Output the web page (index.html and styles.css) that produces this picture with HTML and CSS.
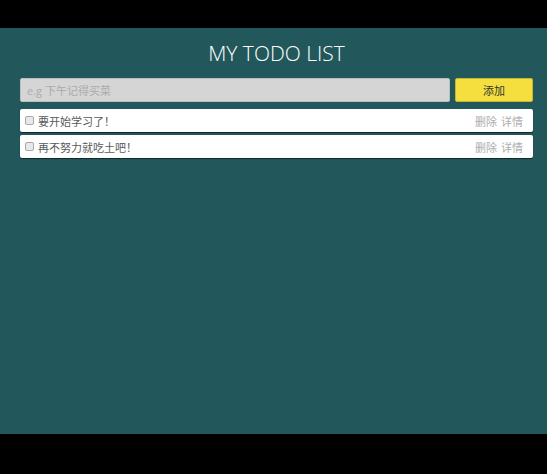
FILE: index.html
```html
<!DOCTYPE html>
<html lang="zh">
<head>
<meta charset="utf-8">
<title>MY TODO LIST</title>
<link rel="stylesheet" href="styles.css">
</head>
<body>
<div class="screen">
  <h1 class="title">MY TODO LIST</h1>
  <div class="add-row">
    <input class="add-input" type="text" placeholder="e.g 下午记得买菜">
    <button class="add-btn">添加</button>
  </div>
  <ul class="list">
    <li class="item">
      <label class="item-left"><input type="checkbox" class="check"><span class="item-text">要开始学习了！</span></label>
      <span class="actions"><span>删除</span><span>详情</span></span>
    </li>
    <li class="item">
      <label class="item-left"><input type="checkbox" class="check"><span class="item-text">再不努力就吃土吧！</span></label>
      <span class="actions"><span>删除</span><span>详情</span></span>
    </li>
  </ul>
</div>
</body>
</html>
```
FILE: styles.css
```css
html, body {
  margin: 0;
  padding: 0;
  background: #000;
  height: 100%;
}
body {
  font-family: "Open Sans", "Noto Sans CJK SC", sans-serif;
}
.screen {
  margin-top: 28px;
  height: 406px;
  background: #22585c;
  padding: 0 14px 0 20px;
  box-sizing: border-box;
  overflow: hidden;
}
.title {
  margin: 0;
  padding-top: 10px;
  height: 50px;
  box-sizing: border-box;
  text-align: center;
  color: #fff;
  font-weight: 300;
  font-size: 21px;
  line-height: 30px;
}
.add-row {
  display: flex;
  gap: 5px;
  height: 24px;
}
.add-input {
  flex: 1;
  margin: 0;
  border: 1px solid #b9c0c0;
  border-radius: 2px;
  background: #d5d5d5;
  padding: 0 6px;
  font-family: "Open Sans", "Noto Sans CJK SC", sans-serif;
  font-size: 11px;
  color: #555;
  outline: none;
}
.add-input::placeholder {
  color: #ababab;
}
.add-btn {
  width: 78px;
  margin: 0;
  border: 1px solid #c7b632;
  border-radius: 2px;
  background: #f4df3e;
  font-family: "Noto Sans CJK SC", sans-serif;
  font-size: 11px;
  color: #333;
  padding: 0;
}
.list {
  list-style: none;
  margin: 7px 0 0;
  padding: 0;
  display: flex;
  flex-direction: column;
  gap: 3px;
}
.item {
  height: 23px;
  background: #fff;
  border-radius: 2px;
  box-shadow: 0 1px 1px rgba(0,0,0,0.55);
  display: flex;
  align-items: center;
  justify-content: space-between;
  padding: 0 10px 0 5px;
  font-family: "Noto Sans CJK SC", sans-serif;
  font-size: 11px;
}
.item-left {
  display: flex;
  align-items: center;
  gap: 4px;
}
.check {
  width: 9px;
  height: 9px;
  margin: 0;
  appearance: none;
  border: 1px solid #a8a8a8;
  border-radius: 2px;
  background: #e8e8e8;
}
.item-text {
  color: #5a5a5a;
}
.actions {
  display: flex;
  gap: 4px;
  color: #adadad;
}
```
